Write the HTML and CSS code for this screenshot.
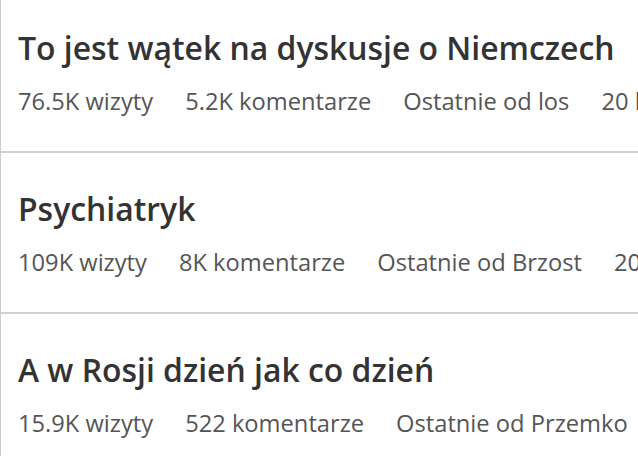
FILE: index.html
```html
<!DOCTYPE html>
<html lang="pl">

<head>
  <meta charset="UTF-8">
  <meta name="viewport" content="width=device-width, initial-scale=1.0">
  <title>Wątki</title>
  <link rel="stylesheet" href="styles.css">
</head>

<body>
  <!-- Thread list -->
  <div class="thread-list">
    <div class="thread">
      <a href="#" class="thread-title">To jest wątek na dyskusje o Niemczech</a>
      <div class="thread-meta">
        <span>76.5K wizyty</span>
        <span>5.2K komentarze</span>
        <span>Ostatnie od los</span>
        <span>20 lut</span>
      </div>
    </div>

    <div class="thread">
      <a href="#" class="thread-title">Psychiatryk</a>
      <div class="thread-meta">
        <span>109K wizyty</span>
        <span>8K komentarze</span>
        <span>Ostatnie od Brzost</span>
        <span>20 lut</span>
      </div>
    </div>

    <div class="thread">
      <a href="#" class="thread-title">A w Rosji dzień jak co dzień</a>
      <div class="thread-meta">
        <span>15.9K wizyty</span>
        <span>522 komentarze</span>
        <span>Ostatnie od Przemko</span>
        <span>20 lut</span>
      </div>
    </div>
  </div>
</body>

</html>
```

FILE: styles.css
```css
/* CSS styles */
body {
  font-family: "Open Sans", Arial, sans-serif;
  margin: 0;
  padding: 0;
  background-color: #fff;
  overflow: hidden;
}

.thread-list {
  /* page is scrolled a little, top of the first item is cut off */
  margin-top: -8px;
  border-left: 1px solid #ccc;
}

.thread {
  padding: 36px 0 34px 17px;
  border-bottom: 2px solid #d0d0d0;
  overflow: hidden;
}

.thread-title {
  display: block;
  font-size: 31.9px;
  line-height: 40px;
  font-weight: 600;
  color: #333;
  text-decoration: none;
  white-space: nowrap;
}

.thread-meta {
  display: flex;
  gap: 32px;
  margin-top: 17px;
  font-size: 23.7px;
  line-height: 32px;
  color: #555;
  white-space: nowrap;
}
```
